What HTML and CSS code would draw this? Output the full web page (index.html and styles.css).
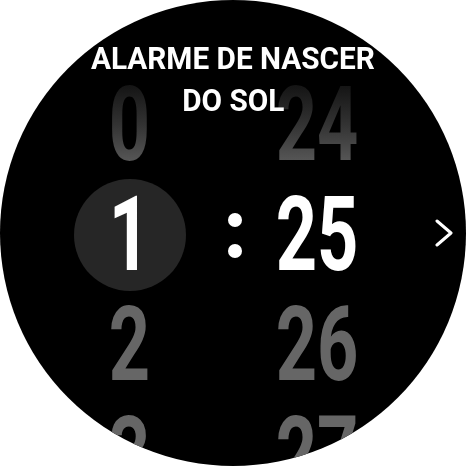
FILE: index.html
```html
<!DOCTYPE html>
<html lang="pt">
<head>
<meta charset="utf-8">
<title>Alarme de nascer do sol</title>
<link rel="stylesheet" href="styles.css">
</head>
<body>
<div class="watch">
  <h1 class="title"><span class="line">ALARME DE NASCER</span><span class="line">DO SOL</span></h1>
  <div class="picker">
    <div class="col hours">
      <div class="cell fade"><span class="num">0</span></div>
      <div class="cell selected"><span class="num">1</span></div>
      <div class="cell"><span class="num">2</span></div>
      <div class="cell"><span class="num">3</span></div>
    </div>
    <div class="col sep">
      <div class="cell"></div>
      <div class="cell colon"><i class="dot"></i><i class="dot"></i></div>
    </div>
    <div class="col minutes">
      <div class="cell fade"><span class="num">24</span></div>
      <div class="cell active"><span class="num">25</span></div>
      <div class="cell"><span class="num">26</span></div>
      <div class="cell"><span class="num">27</span></div>
    </div>
  </div>
  <svg class="next" width="20" height="28" viewBox="0 0 20 28" aria-hidden="true">
    <polyline points="3,2 17,14 3,26" fill="none" stroke="#fff" stroke-width="3" stroke-linecap="round" stroke-linejoin="round"/>
  </svg>
</div>
</body>
</html>
```

FILE: styles.css
```css
html, body {
  margin: 0;
  padding: 0;
  background: #fff;
}

.watch {
  position: relative;
  width: 466px;
  height: 466px;
  border-radius: 50%;
  background: #000;
  overflow: hidden;
  font-family: Roboto, "Liberation Sans", sans-serif;
  color: #fff;
}

.title {
  position: absolute;
  top: 38px;
  left: 0;
  right: 0;
  margin: 0;
  display: flex;
  flex-direction: column;
  align-items: center;
  font-size: 31px;
  line-height: 42px;
  font-weight: 700;
  z-index: 2;
}

.line {
  display: block;
  transform: scaleX(0.96);
  white-space: nowrap;
}

.picker {
  display: flex;
  padding-top: 70px;
  padding-left: 74px;
}

.col {
  display: flex;
  flex-direction: column;
}

.hours { width: 112px; }
.sep { width: 20px; margin-left: 39px; }
.minutes { width: 114px; margin-left: 15px; }

.cell {
  position: relative;
  height: 110px;
  display: flex;
  justify-content: center;
  font-size: 103px;
  line-height: 110px;
  font-weight: 700;
  color: #666;
}

.num {
  display: inline-block;
  transform: scaleX(0.7);
  position: relative;
}

.fade .num {
  background: linear-gradient(to bottom, #111 10%, #333 50%, #5e5e5e 90%);
  -webkit-background-clip: text;
  background-clip: text;
  color: transparent;
}

.selected, .active { color: #fff; }

.selected::before {
  content: "";
  position: absolute;
  left: 0;
  top: -1px;
  width: 112px;
  height: 112px;
  border-radius: 50%;
  background: #262626;
}

.colon {
  flex-direction: column;
  align-items: center;
  justify-content: center;
  gap: 17px;
}

.dot {
  display: block;
  width: 14px;
  height: 14px;
  border-radius: 50%;
  background: #fff;
}

.next {
  position: absolute;
  left: 434px;
  top: 219px;
}
```
